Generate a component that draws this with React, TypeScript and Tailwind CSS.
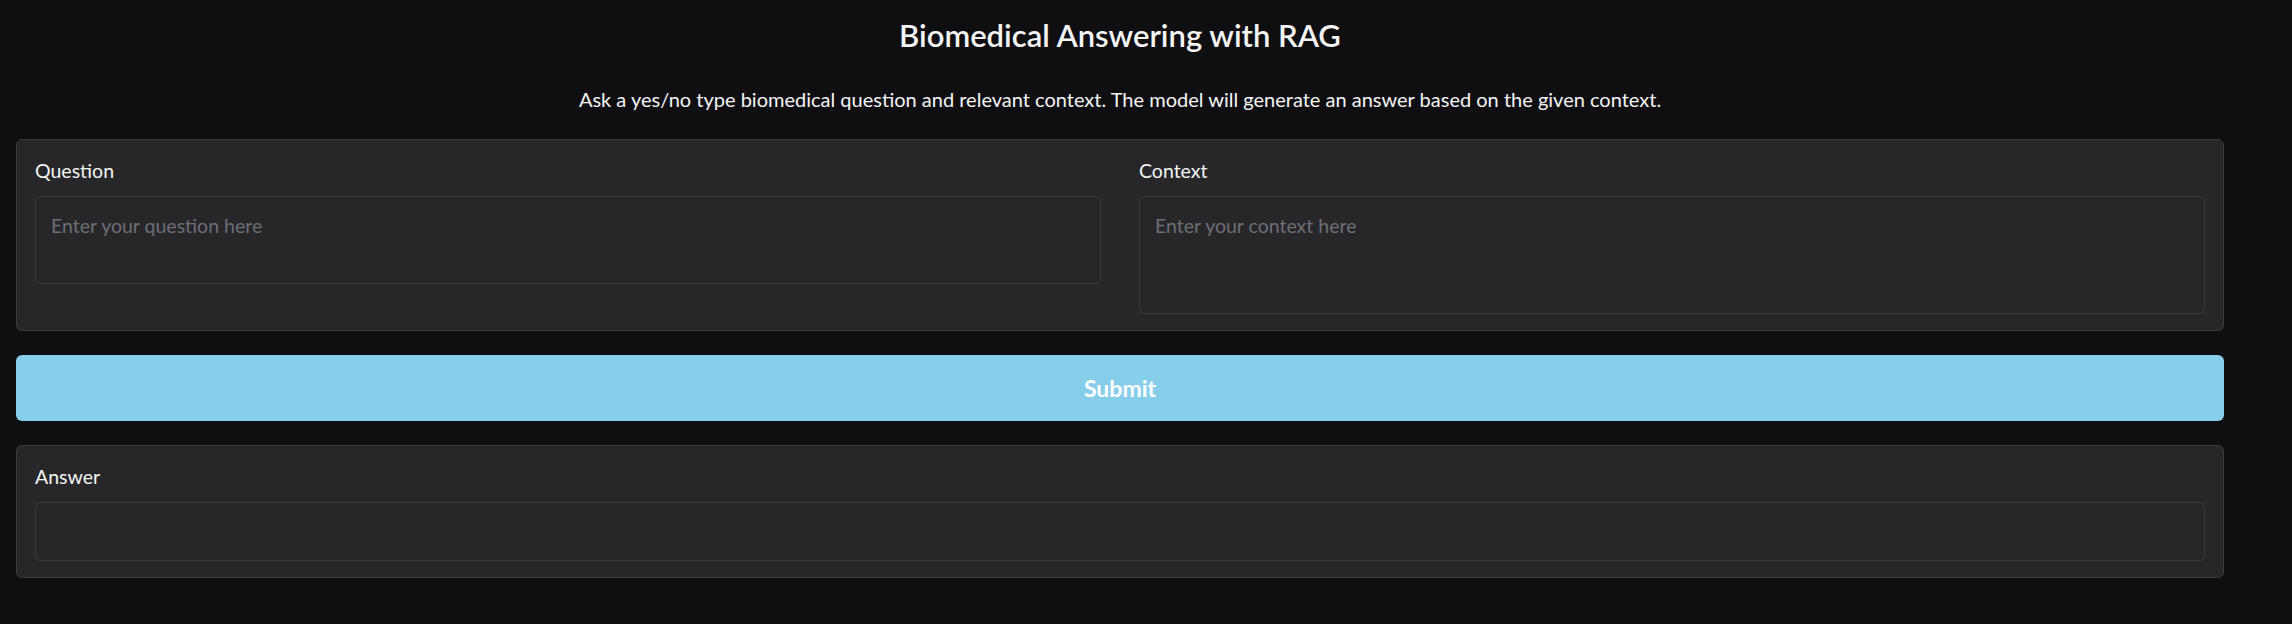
import React, { useState } from 'react';

type FieldProps = {
  label: string;
  placeholder?: string;
  heightClass: string;
  value: string;
  onChange?: (v: string) => void;
  readOnly?: boolean;
};

const Field: React.FC<FieldProps> = ({ label, placeholder, heightClass, value, onChange, readOnly }) => (
  <label className="flex flex-col">
    <span className="text-[19.5px] leading-[30px] text-[#f4f4f5]">{label}</span>
    <textarea
      className={`mt-[10px] w-full resize-none rounded-[6px] border border-[#3b3b3f] bg-[#27272a] px-[15px] py-[14px] text-[19.5px] leading-[30px] text-[#f4f4f5] outline-none placeholder:text-[#6e6e77] ${heightClass}`}
      placeholder={placeholder}
      value={value}
      readOnly={readOnly}
      onChange={(e) => onChange?.(e.target.value)}
    />
  </label>
);

export default function App() {
  const [question, setQuestion] = useState('');
  const [context, setContext] = useState('');
  const [answer] = useState('');

  return (
    <div className="min-h-screen bg-[#0f0f11] pl-4 pr-[68px] font-[Lato,sans-serif] text-[#f4f4f5]">
      <h1 className="pt-[15px] text-center text-[31px] font-semibold leading-[40px]">
        Biomedical Answering with RAG
      </h1>
      <p className="mt-[29px] text-center text-[20px] leading-[30px]">
        Ask a yes/no type biomedical question and relevant context. The model will generate an answer based on the given context.
      </p>

      {/* inputs */}
      <div className="mt-[25px] grid grid-cols-2 items-start gap-x-[38px] rounded-[6px] border border-[#3b3b3f] bg-[#27272a] px-[18px] pb-[16px] pt-[16px]">
        <Field
          label="Question"
          placeholder="Enter your question here"
          heightClass="h-[88px]"
          value={question}
          onChange={setQuestion}
        />
        <Field
          label="Context"
          placeholder="Enter your context here"
          heightClass="h-[118px]"
          value={context}
          onChange={setContext}
        />
      </div>

      <button className="mt-[24px] flex h-[66px] w-full items-center justify-center rounded-[6px] bg-[#87ceeb] text-[23px] font-bold text-white">
        Submit
      </button>

      <div className="mt-[24px] rounded-[6px] border border-[#3b3b3f] bg-[#27272a] px-[18px] pb-[16px] pt-[16px]">
        <Field label="Answer" heightClass="h-[59px]" value={answer} readOnly />
      </div>
    </div>
  );
}
